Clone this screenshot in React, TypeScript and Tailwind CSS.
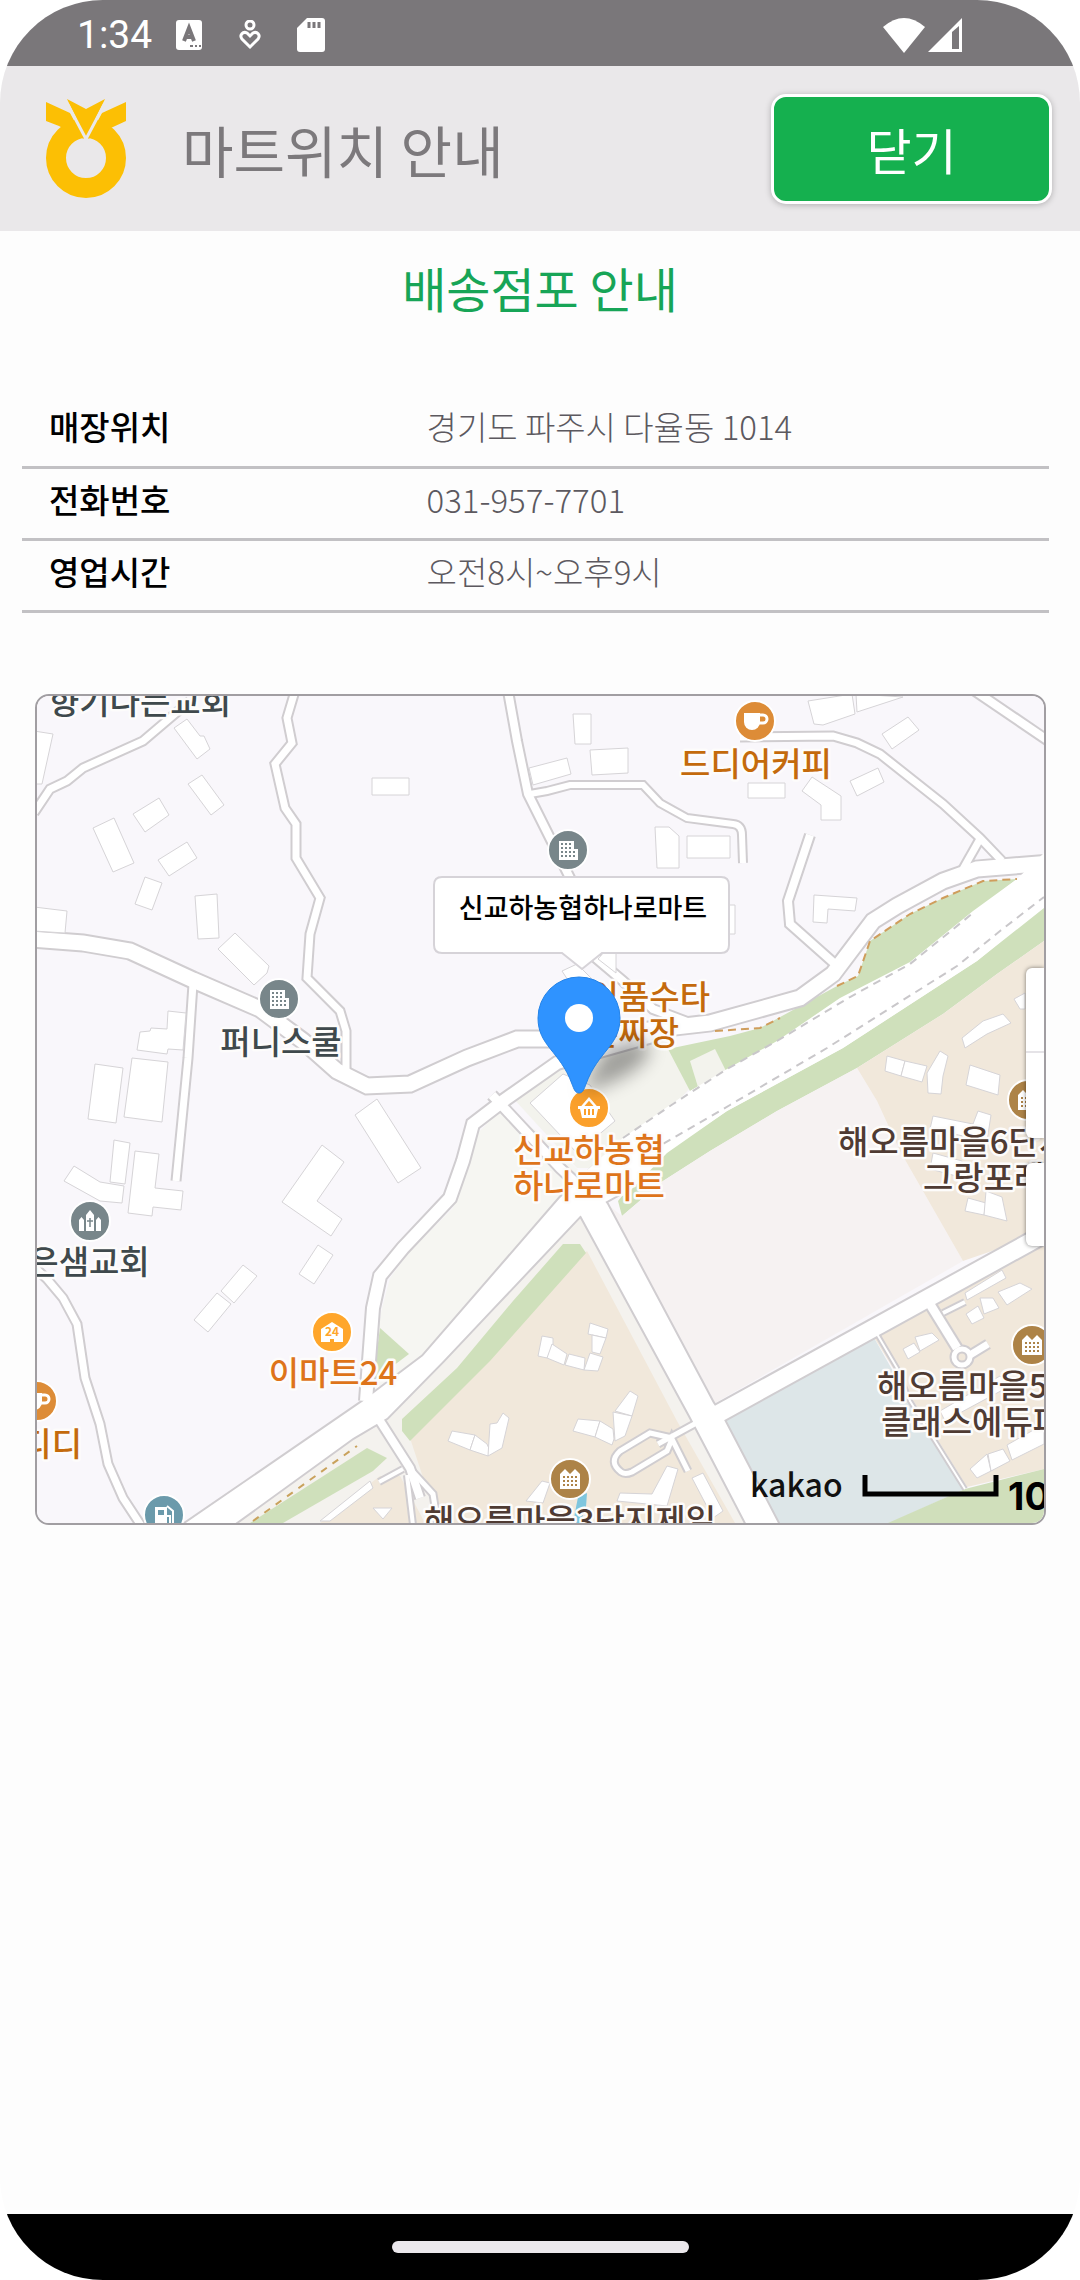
interface Poi {
    x: number;
    y: number;
    color: string;
    kind: 'building' | 'apartment' | 'coffee' | 'church' | 'basket' | 'store' | 'gas';
}

interface Label {
    text: string;
    x: number;
    y: number;
    color: string;
    anchor?: 'start' | 'middle' | 'end';
}

const storeInfo = [
    { label: '매장위치', value: '경기도 파주시 다율동 1014' },
    { label: '전화번호', value: '031-957-7701' },
    { label: '영업시간', value: '오전8시~오후9시' },
];

const areas = [
    // cream parcels beside the main road
    { fill: '#f6f6f2', d: 'M502 1107L473 1137L453 1207L410 1250L390 1277L382 1307L365 1395L423 1355L590 1180L537 1130Z' },
    { fill: '#f3f3ed', d: 'M513 1097L537 1077L557 1063L667 1038L690 1087L617 1167L577 1167Z' },
    { fill: '#f4f2ee', d: 'M583 1213L690 1415L745 1522H237L353 1437L373 1428L387 1417L493 1307Z' },
    { fill: '#cfe0bb', d: 'M380 1327L409 1353L373 1380Z' },
    // green belt north of the highway
    { fill: '#cfe0bb', d: 'M668 1048L730 1035L760 1027L837 985L858 975L870 940L910 913L943 897L983 880L1017 878L973 912L910 963L840 1000L777 1042L727 1070L690 1090Z' },
    { fill: '#f3f3ed', d: 'M690 1060L715 1048L726 1070L698 1086Z' },
    // green belt south of the highway
    { fill: '#cfe0bb', d: 'M622 1215L618 1200L637 1177L667 1150L727 1110L843 1047L977 960L1044 905V940L997 973L943 1013L857 1067L777 1110L710 1150L663 1180Z' },
    { fill: '#f6f2f2', d: 'M622 1215L663 1180L710 1150L777 1110L857 1067L877 1100L900 1150L963 1260L715 1402L607 1203Z' },
    { fill: '#f1e8db', d: 'M857 1067L943 1013L997 973L1044 940V1232L963 1260L900 1150L877 1100Z' },
    { fill: '#f1e8db', d: 'M873 1335L923 1308L1044 1243V1468L967 1486Z' },
    { fill: '#dde6e8', d: 'M722 1415L873 1335L910 1400L965 1488L890 1522H777Z' },
    { fill: '#d0dfbb', d: 'M965 1488L1044 1468V1522H888Z' },
    // apartment block
    { fill: '#f1e8db', d: 'M587 1250L677 1420L735 1522H438L410 1437Z' },
    { fill: '#cfe0bb', d: 'M563 1243H580L586 1252L490 1360L410 1440L402 1430V1418L457 1367L513 1300Z' },
    { fill: '#cfe0bb', d: 'M367 1447L387 1457L373 1470L283 1522H250Z' },
    { fill: '#f1e8db', d: 'M380 1475L400 1475L425 1522H320Z' },
    { fill: '#7fc6de', d: 'M578 1496L587 1492L586 1506L580 1522H573Z' },
];

const roads = [
    { w: 15, d: 'M30 938L83 942L130 950L193 979L260 1008L303 1040L337 1070L367 1085L410 1083L467 1057L517 1038L570 1038L710 1022L800 997L833 973L873 920L897 905L943 880L977 868L1050 862' },
    { w: 12, d: 'M670 1030L557 1062L503 1100L473 1123L463 1160L450 1197L403 1247L380 1275L373 1307L366 1400' },
    { w: 7, d: 'M295 690L287 717L292 742L275 763L285 807L296 823V857L320 897L310 933L307 977L340 1010L346 1030V1070' },
    { w: 7, d: 'M34 812L50 788L67 780L83 767L143 740L170 717L190 700' },
    { w: 7, d: 'M193 983L188 1057L176 1180' },
    { w: 8, d: 'M508 690L517 740L528 793L570 877L597 958L623 980L653 1008L690 1022' },
    { w: 6, d: 'M530 793L547 790L570 784H643L660 802L687 817L710 820L733 823Q742 824 742 834L743 862' },
    { w: 7, d: 'M740 736L833 735L857 742L880 753L943 803L980 837L1002 860' },
    { w: 7, d: 'M980 838L963 868' },
    { w: 8, d: 'M810 834L788 900L790 923L835 963' },
    { w: 8, d: 'M975 690L1050 741' },
    { w: 7, d: 'M30 1262L47 1278L63 1297L77 1323L85 1377L100 1423L108 1463L123 1497L142 1526' },
    { w: 9, d: 'M492 1094L560 1167L590 1195' },
    { w: 17, d: 'M705 1420L1050 1230' },
    { w: 8, d: 'M380 1420L410 1467L420 1497' },
    { w: 4, d: 'M403 1468L379 1481' },
    { w: 5, d: 'M412 1470L433 1493L438 1524' },
    { w: 4, d: 'M407 1474L413 1524' },
    { w: 5, d: 'M700 1420L658 1443M672 1437L650 1432L620 1450Q608 1461 621 1471Q625 1474 632 1471L667 1450L672 1438L688 1470' },
    { w: 9, d: 'M928 1300L957 1347' },
    { w: 4, d: 'M943 1312L965 1301' },
    { w: 7, d: 'M970 1354L988 1343' },
    { w: 5, d: 'M954 1356A8 8 0 1 0 970 1356A8 8 0 1 0 954 1356' },
    { w: 2, d: 'M877 1333L897 1367L910 1400L965 1488' },
];

const wideRoads = [
    'M180 1526L362 1401L423 1355L560 1197L600 1160L625 1190L580 1215L493 1307L443 1360L387 1417L353 1437L230 1526Z',
    'M580 1213L690 1415L710 1453L748 1526H780L722 1415L713 1402L607 1203L590 1180Z',
];

const buildings = [
    '174,727 187,718 200,735 204,735 210,748 197,758',
    '188,783 202,774 224,804 211,814',
    '133,813 159,797 169,814 145,831',
    '93,827 114,817 134,862 113,871',
    '158,859 187,841 197,857 169,875',
    '145,876 162,882 152,909 135,903',
    '195,895 217,893 219,937 198,938',
    '218,948 235,932 269,965 267,972 254,984',
    '34,730 53,733 42,783 34,783',
    '34,906 67,910 65,932 34,930',
    '168,1010 186,1012 183,1049 168,1048 167,1053 137,1049 140,1031 150,1030 151,1027 167,1028',
    '95,1063 123,1067 116,1122 88,1118',
    '132,1057 168,1061 162,1121 124,1116',
    '114,1139 130,1142 125,1183 110,1181',
    '74,1165 100,1181 124,1185 122,1202 100,1200 64,1180',
    '135,1150 159,1153 155,1187 183,1190 181,1209 153,1206 152,1215 128,1212',
    '322,1144 344,1161 317,1200 342,1218 331,1235 282,1201',
    '318,1244 333,1254 314,1283 299,1273',
    '243,1264 257,1275 234,1302 221,1290',
    '217,1292 231,1303 208,1331 194,1319',
    '355,1114 377,1098 421,1167 398,1182',
    '372,777 409,777 409,794 372,794',
    '573,713 591,713 591,743 575,743',
    '590,749 628,747 628,772 592,774',
    '529,767 567,757 571,773 533,784',
    '655,826 669,826 679,835 679,867 657,867',
    '687,835 730,835 730,857 687,857',
    '729,904 735,904 735,933 729,933',
    '808,700 852,693 855,713 823,724 814,723',
    '856,693 903,696 857,711',
    '882,733 908,716 919,729 892,748',
    '850,780 878,767 884,781 857,795',
    '748,782 785,782 785,797 748,797',
    '812,776 841,795 841,819 821,819 821,804 802,790',
    '814,894 857,897 855,910 828,908 827,922 813,921',
    '562,970 577,963 592,978 575,990',
    '605,950 616,950 616,972 598,958',
    '530,1102 563,1073 590,1084 615,1120 577,1152',
    '962,1037 983,1020 1003,1013 1011,1022 987,1033 965,1047',
    '887,1055 905,1060 901,1075 885,1070',
    '905,1060 927,1065 922,1081 901,1075',
    '927,1072 940,1050 948,1055 943,1075 941,1093 928,1092',
    '970,1064 1000,1074 998,1094 966,1084',
    '1014,998 1025,992 1025,1008 1020,1008',
    '933,1115 973,1123 978,1110 991,1114 987,1140 930,1128',
    '933,1152 962,1160 960,1176 930,1168',
    '968,1197 986,1202 984,1214 965,1210',
    '986,1190 1002,1196 1007,1220 984,1214',
    '965,1292 1002,1269 1006,1277 967,1299',
    '966,1313 978,1305 984,1317 972,1323',
    '980,1297 993,1297 999,1307 984,1313',
    '998,1291 1020,1282 1032,1288 1007,1304',
    '903,1348 914,1342 920,1351 908,1358',
    '915,1336 932,1332 939,1339 920,1350',
    '940,1410 1000,1375 1010,1385 945,1420',
    '970,1468 987,1453 991,1470 977,1477',
    '988,1453 1003,1448 1010,1460 991,1470',
    '1007,1444 1044,1423 1044,1443 1012,1459',
    '542,1335 553,1337 553,1347 547,1357 538,1355',
    '552,1343 567,1353 564,1364 547,1357',
    '569,1353 585,1357 584,1369 565,1364',
    '590,1322 608,1328 606,1337 588,1333',
    '592,1334 606,1337 600,1353 592,1351',
    '590,1352 603,1356 598,1370 584,1369',
    '452,1430 475,1434 470,1449 448,1440',
    '475,1434 487,1443 490,1450 488,1455 470,1449',
    '490,1423 497,1422 503,1412 509,1417 502,1447 488,1455',
    '578,1418 600,1420 595,1436 573,1430',
    '600,1420 613,1428 614,1438 612,1444 595,1436',
    '615,1410 630,1390 638,1395 632,1415',
    '613,1411 632,1415 625,1435 615,1440',
    '542,1480 550,1482 543,1502 526,1500',
    '667,1465 678,1468 667,1505 617,1500 620,1492 652,1493',
    '692,1477 703,1472 723,1510 713,1517',
    '373,1507 392,1507 383,1518',
    '320,1520 370,1480 373,1487 330,1520',
];

const pois: Poi[] = [
    { x: 279, y: 998, color: '#78868a', kind: 'building' },
    { x: 568, y: 849, color: '#78868a', kind: 'building' },
    { x: 90, y: 1220, color: '#78868a', kind: 'church' },
    { x: 755, y: 720, color: '#dd8c37', kind: 'coffee' },
    { x: 37, y: 1400, color: '#dd8c37', kind: 'coffee' },
    { x: 589, y: 1107, color: '#fba02b', kind: 'basket' },
    { x: 332, y: 1331, color: '#ffa62b', kind: 'store' },
    { x: 164, y: 1514, color: '#6b9aab', kind: 'gas' },
    { x: 570, y: 1478, color: '#ad8347', kind: 'apartment' },
    { x: 1028, y: 1099, color: '#ad8347', kind: 'apartment' },
    { x: 1032, y: 1344, color: '#ad8347', kind: 'apartment' },
];

const labels: Label[] = [
    { text: '향기나는교회', x: 140, y: 713, color: '#3f494c' },
    { text: '퍼니스쿨', x: 281, y: 1053, color: '#3f494c' },
    { text: '은샘교회', x: 89, y: 1273, color: '#3f494c' },
    { text: '드디어커피', x: 756, y: 775, color: '#c46a0c' },
    { text: '디디', x: 82, y: 1455, color: '#c46a0c', anchor: 'end' },
    { text: '일품수타', x: 710, y: 1008, color: '#c46a0c', anchor: 'end' },
    { text: '손짜장', x: 679, y: 1044, color: '#c46a0c', anchor: 'end' },
    { text: '신교하농협', x: 589, y: 1161, color: '#de741a' },
    { text: '하나로마트', x: 589, y: 1197, color: '#de741a' },
    { text: '이마트24', x: 333, y: 1384, color: '#de741a' },
    { text: '해오름마을3단지제일', x: 570, y: 1532, color: '#4f3b33' },
    { text: '해오름마을6단지', x: 838, y: 1153, color: '#4f3b33', anchor: 'start' },
    { text: '그랑포레', x: 923, y: 1189, color: '#4f3b33', anchor: 'start' },
    { text: '해오름마을5단지', x: 877, y: 1397, color: '#4f3b33', anchor: 'start' },
    { text: '클래스에듀파크', x: 881, y: 1433, color: '#4f3b33', anchor: 'start' },
];

function PoiGlyph({ kind, color }: { kind: Poi['kind']; color: string }) {
    if (kind === 'building' || kind === 'apartment') {
        const outline = kind === 'building' ? 'M-9 -9H6V-1H10V10H-9Z' : 'M-10 10V-5L-5 -10L0 -5L5 -10L10 -5V10Z';
        const rows = kind === 'building' ? [-6, -2, 2, 6] : [-2, 2, 6];
        return (
            <g>
                <path d={outline} fill="#fff" />
                {rows.map((y) => [-6, -2, 2, 6].filter((x) => kind === 'apartment' || x < 6 || y > 0).map((x) => (
                    <rect key={`${x}${y}`} x={x - 1} y={y - 1} width="2" height="2" fill={color} />
                )))}
            </g>
        );
    }
    if (kind === 'coffee') {
        return (
            <g>
                <path d="M-11 -8H5V1A8 8 0 0 1 -3 9A8 8 0 0 1 -11 1Z" fill="#fff" />
                <path d="M5 -6H8A4 4 0 0 1 8 2H4" fill="none" stroke="#fff" strokeWidth="3" />
            </g>
        );
    }
    if (kind === 'church') {
        return (
            <g>
                <path d="M-4 10V-6L0 -11L4 -6V10ZM-11 10V-1L-8.500 -4L-6 -1V10ZM6 10V-1L8.500 -4L11 -1V10Z" fill="#fff" />
                <path d="M0 -3V6M-3 0H3" stroke={color} strokeWidth="1.500" />
            </g>
        );
    }
    if (kind === 'basket') {
        return (
            <g>
                <path d="M-11 -2H11V1H9L7 10H-7L-9 1H-11Z" fill="#fff" />
                <path d="M-7 -1L0 -9L7 -1" fill="none" stroke="#fff" strokeWidth="2.500" />
                <path d="M-4 1V7M0 1V7M4 1V7" stroke={color} strokeWidth="2" />
            </g>
        );
    }
    if (kind === 'store') {
        return (
            <g>
                <path d="M-11 10V-3L0 -10L11 -3V10H2V7H-2V10Z" fill="#fff" />
                <text x="0" y="4" textAnchor="middle" fontSize="12" fontWeight="700" fill={color}>24</text>
            </g>
        );
    }
    return (
        <g>
            <path d="M-9 10V-8H3V10Z" fill="#fff" />
            <rect x="-6" y="-5" width="6" height="5" fill={color} />
            <path d="M3 -9L9 -4V8M3 1H6V8" fill="none" stroke="#fff" strokeWidth="2" />
        </g>
    );
}

function NonghyupLogo() {
    return (
        <svg viewBox="46 99 80 99" className="h-[99px] w-20 shrink-0" role="img" aria-label="농협">
            <circle cx="86" cy="158" r="30" fill="none" stroke="#fcbf04" strokeWidth="20" />
            <path d="M46 102L70 113L84 139L70 132L59 126L46 121ZM126 102L102 113L88 139L102 132L113 127L126 121Z" fill="#fcbf04" />
            <path d="M67 99L86 109L105 99L86 138Z" fill="#fcbf04" />
            <path d="M68 105L86 139L104 105" fill="none" stroke="#eae8ea" strokeWidth="3" />
        </svg>
    );
}

function StatusBar() {
    return (
        <div className="flex h-[66px] items-center bg-[#7a777a] pl-[77px] pr-[118px] text-white">
            <span className="pt-1 font-['Roboto',sans-serif] text-[39px] leading-none">1:34</span>
            <svg viewBox="0 0 26 30" className="ml-6 mt-1 h-[30px] w-[26px]">
                <rect width="26" height="30" rx="3" fill="#fff" />
                <path d="M8 21L13 8L18 21M10 17H16" fill="none" stroke="#7a777a" strokeWidth="4" />
                <path d="M14 26H17M19 26H21M23 26H25" stroke="#7a777a" strokeWidth="2" />
            </svg>
            <svg viewBox="0 0 22 30" className="ml-[37px] mt-1 h-[30px] w-[22px]" fill="none" stroke="#fff" strokeWidth="3">
                <circle cx="11" cy="5" r="4" />
                <path d="M11 27L3 19C0 15 4 11 8 13L11 16L14 13C18 11 22 15 19 19Z" />
            </svg>
            <svg viewBox="0 0 28 34" className="ml-9 mt-1 h-[34px] w-7">
                <path d="M10 0H25Q28 0 28 3V31Q28 34 25 34H3Q0 34 0 31V10Z" fill="#fff" />
                <path d="M12 4V10M17 4V10M22 4V10" stroke="#7a777a" strokeWidth="3" />
            </svg>
            <svg viewBox="0 0 42 35" className="ml-auto mt-1 h-[35px] w-[42px]">
                <path d="M0 9Q21 -9 42 9L21 35Z" fill="#fff" />
            </svg>
            <svg viewBox="0 0 34 34" className="ml-[3px] mt-1 h-[34px] w-[34px]">
                <path d="M34 0V34H0Z" fill="#fff" />
                <path d="M24 14L31 8V31H24Z" fill="#7a777a" />
            </svg>
        </div>
    );
}

function StoreMap() {
    return (
        <section className="relative ml-[35px] mr-[34px] mt-[81px] overflow-hidden rounded-[14px] border-2 border-[#a19ea2]">
            <svg
                viewBox="37 695 1007 827"
                className="block h-auto w-full font-['Noto_Sans_CJK_KR',sans-serif]"
                role="img"
                aria-label="신교하농협하나로마트 지도"
            >
                <defs>
                    <filter id="pinShadow" x="-50%" y="-50%" width="200%" height="200%">
                        <feGaussianBlur stdDeviation="9" />
                    </filter>
                </defs>
                <rect x="37" y="695" width="1007" height="827" fill="#f9f7fb" />
                {areas.map((area) => <path key={area.d} d={area.d} fill={area.fill} />)}

                {/* road edges go first so that junctions stay open */}
                <g fill="none" stroke="#d0cdd0">
                    {roads.map((road) => <path key={road.d} d={road.d} strokeWidth={road.w + 4} />)}
                    {wideRoads.map((d) => <path key={d} d={d} strokeWidth="4" />)}
                </g>
                <path d="M575 1180L623 1137L690 1090L727 1068L777 1040L840 997L910 961L973 910L1017 878L1044 852V907L977 960L843 1047L727 1110L667 1152L625 1195Z" fill="#fff" />
                <g fill="none" stroke="#fff">
                    {roads.map((road) => <path key={road.d} d={road.d} strokeWidth={road.w} />)}
                </g>
                {wideRoads.map((d) => <path key={d} d={d} fill="#fff" />)}

                <g fill="none" strokeWidth="2">
                    <path d="M623 1137L673 1103L727 1068L777 1040L850 996L910 963L973 912" stroke="#c9c7ca" strokeDasharray="8 6" />
                    <path d="M640 1158L663 1143L730 1104L827 1047L957 965L1000 930L1044 896" stroke="#c9c7ca" strokeDasharray="8 6" />
                    <path d="M715 1030L760 1027L780 1017M837 985L858 975L870 940L910 913L943 897L983 880L1017 878" stroke="#cf9d5c" strokeDasharray="8 5" />
                    <path d="M253 1520L357 1445" stroke="#c9a25c" strokeDasharray="7 7" />
                </g>
                <g fill="#fff" stroke="#d6d4d7" strokeWidth="1">
                    {buildings.map((points) => <polygon key={points} points={points} />)}
                </g>

                {pois.map((poi) => (
                    <g key={`${poi.x}-${poi.y}`} transform={`translate(${poi.x} ${poi.y})`}>
                        <circle r="20" fill={poi.color} stroke="#fff" strokeWidth="2" />
                        <PoiGlyph kind={poi.kind} color={poi.color} />
                    </g>
                ))}
                <g fontSize="33" fontWeight="500" stroke="#fdfcfb" strokeWidth="5" strokeLinejoin="round" paintOrder="stroke">
                    {labels.map((label) => (
                        <text key={label.text} x={label.x} y={label.y} fill={label.color} textAnchor={label.anchor ?? 'middle'}>
                            {label.text}
                        </text>
                    ))}
                </g>

                {/* store marker */}
                <path d="M581 1092L604 1050Q640 1030 650 1046Q648 1072 581 1092Z" fill="#000" opacity="0.35" filter="url(#pinShadow)" />
                <path d="M579 1092C575 1092 574 1088 572 1083C560 1050 538 1045 538 1017A41 41 0 0 1 620 1017C620 1045 598 1050 586 1083C584 1088 583 1092 579 1092Z" fill="#2f93ff" stroke="#2383e8" strokeWidth="1" />
                <circle cx="579" cy="1017" r="14" fill="#fff" />

                {/* store name balloon */}
                <path d="M442 876H721Q729 876 729 884V944Q729 952 721 952H602L582 968L562 952H442Q434 952 434 944V884Q434 876 442 876Z" fill="#fff" stroke="#d6d3d8" strokeWidth="2" />
                <text x="583" y="917" textAnchor="middle" fontSize="27" fontWeight="500" fill="#000">신교하농협하나로마트</text>

                <text x="750" y="1496" fontSize="32" fontWeight="500" fill="#111">kakao</text>
                <path d="M865 1474V1493H996V1474" fill="none" stroke="#000" strokeWidth="5" />
                <text x="1008" y="1509" className="font-['Inter',sans-serif]" fontSize="38" fontWeight="700" fill="#000">100m</text>
            </svg>
            <div className="absolute right-0 top-[33%] flex w-[18px] flex-col gap-[25px]">
                <div className="flex flex-col rounded-l-md bg-white shadow-[0_0_4px_rgba(0,0,0,0.5)]">
                    <button type="button" aria-label="지도" className="h-[85px] border-b-2 border-[#e5e3e7]" />
                    <button type="button" aria-label="스카이뷰" className="h-[85px]" />
                </div>
                <button type="button" aria-label="확대" className="h-[83px] rounded-l-md bg-white shadow-[0_0_4px_rgba(0,0,0,0.5)]" />
            </div>
        </section>
    );
}

export default function App() {
    return (
        <div className="bg-white">
            <div className="flex min-h-screen flex-col overflow-hidden rounded-[103px] bg-[#fdfdfd] font-['Noto_Sans_CJK_KR',sans-serif]">
                <StatusBar />
                <header className="flex h-[165px] items-center bg-[#eae8ea] pl-[46px] pr-7">
                    <NonghyupLogo />
                    <h1 className="ml-14 text-[56px] leading-none text-[#7c797c]">마트위치 안내</h1>
                    <button
                        type="button"
                        className="ml-auto h-[110px] w-[281px] rounded-[15px] border-[3px] border-white bg-[#15b04f] text-[49px] leading-none text-white shadow-[0_1px_6px_rgba(0,0,0,0.25)]"
                    >
                        닫기
                    </button>
                </header>
                <main className="flex-1">
                    <h2 className="pt-7 text-center text-[48px] leading-[56px] text-[#17a557]">배송점포 안내</h2>
                    <div className="ml-[22px] mr-[31px] mt-20">
                        <table className="w-full text-left text-[33px] leading-none">
                            <tbody>
                                {storeInfo.map(({ label, value }) => (
                                    <tr key={label} className="h-[72px] border-b-[3px] border-[#c2c1c4]">
                                        <th scope="row" className="w-[39%] pb-2 pl-[27px] font-medium text-black">{label}</th>
                                        <td className="pb-2 pl-1 font-light text-[#5c595f]">{value}</td>
                                    </tr>
                                ))}
                            </tbody>
                        </table>
                    </div>
                    <StoreMap />
                </main>
                <footer className="flex h-[66px] items-center justify-center bg-black">
                    <div className="h-3 w-[297px] rounded-full bg-[#ebe8ec]" />
                </footer>
            </div>
        </div>
    );
}
